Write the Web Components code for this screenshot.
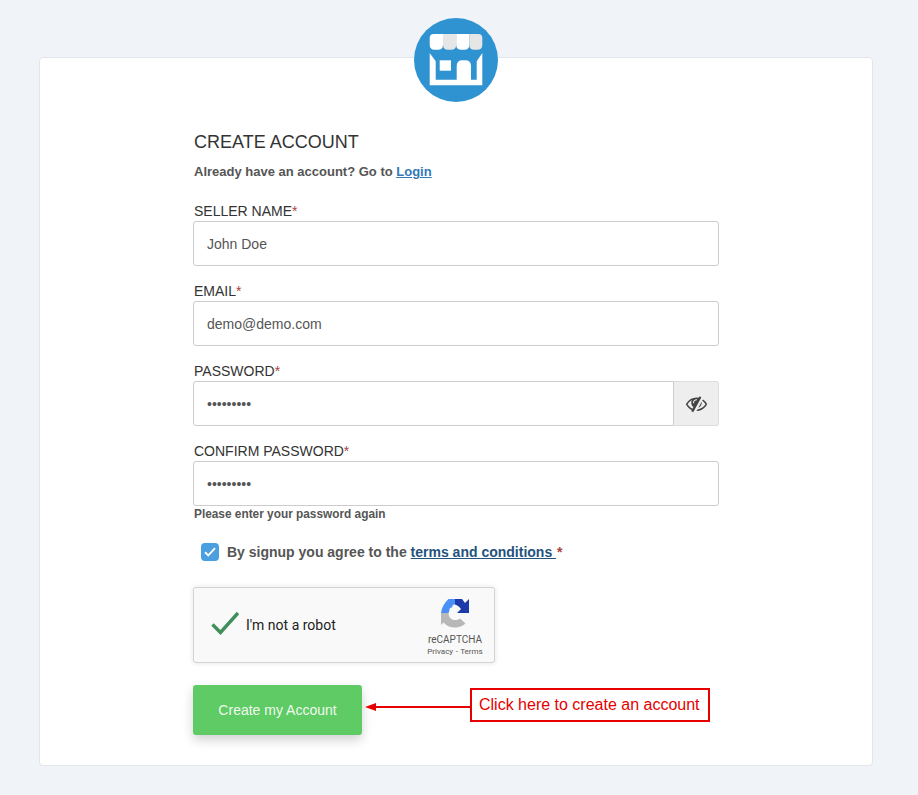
<!DOCTYPE html>
<html>
<head>
<meta charset="utf-8">
<title>Create account</title>
<style>
  html, body { margin: 0; padding: 0; }
  body {
    background: #f0f3f8;
    font-family: "Liberation Sans", Arial, sans-serif;
    color: #333;
  }
</style>
</head>
<body>
<signup-page></signup-page>

<script>
class ShopLogo extends HTMLElement {
  constructor() {
    super();
    this.attachShadow({ mode: "open" });
    this.shadowRoot.innerHTML = `
    <style>
      :host { display: block; width: 84px; height: 84px; }
      svg { display: block; }
    </style>
    <svg width="84" height="84" viewBox="0 0 84 84">
      <circle cx="42" cy="42" r="42" fill="#2f93d1"/>
      <!-- walls -->
      <path fill="#fff" d="M15.700 35 L21.700 43.300 V61.700 H62.700 V43.300 L68.300 35 V67.300 H15.700 Z"/>
      <rect x="25.700" y="42.300" width="11.300" height="10.400" fill="#fff"/>
      <path fill="#fff" d="M42.700 62 V48 Q42.700 42.300 48.500 42.300 H51.200 Q57 42.300 57 48 V62 Z"/>
      <!-- awning -->
      <path fill="#fff" d="M15.700 20 Q15.700 16 19.700 16 H29 V26.700 Q29 31.700 24 31.700 H20.700 Q15.700 31.700 15.700 26.700 Z"/>
      <path fill="#e6e6e6" d="M29 16 H42.200 V26.700 Q42.200 31.700 37.200 31.700 H34 Q29 31.700 29 26.700 Z"/>
      <path fill="#fff" d="M42.200 16 H55.300 V26.700 Q55.300 31.700 50.300 31.700 H47.200 Q42.200 31.700 42.200 26.700 Z"/>
      <path fill="#e6e6e6" d="M55.300 16 H64.300 Q68.300 16 68.300 20 V26.700 Q68.300 31.700 63.300 31.700 H60.300 Q55.300 31.700 55.300 26.700 Z"/>
    </svg>`;
  }
}

class TextField extends HTMLElement {
  constructor() {
    super();
    this.attachShadow({ mode: "open" });
  }

  connectedCallback() {
    const type = this.getAttribute("type") || "text";
    const value = this.getAttribute("value") || "";
    const eye = this.hasAttribute("eye");
    this.shadowRoot.innerHTML = `
    <style>
      :host { display: block; margin-bottom: 17px; }
      label {
        display: block;
        padding-left: 1px;
        font-size: 14px;
        line-height: 16px;
        color: #333;
        margin-bottom: 2px;
      }
      label i { font-style: normal; color: #a94442; }
      .group { display: flex; height: 45px; }
      input {
        flex: 1;
        min-width: 0;
        box-sizing: border-box;
        height: 100%;
        padding: 0 12px 0 13px;
        border: 1px solid #ccc;
        border-radius: 3px;
        background: #fff;
        font: 14px "Liberation Sans", Arial, sans-serif;
        color: #555;
        outline: none;
      }
      .group.eye input { border-radius: 3px 0 0 3px; }
      .addon {
        width: 45px;
        box-sizing: border-box;
        border: 1px solid #ddd;
        border-left: 0;
        border-radius: 0 3px 3px 0;
        background: #eee;
        display: flex;
        align-items: center;
        justify-content: center;
      }
      .hint {
        padding-left: 1px;
        font-size: 11.850px;
        font-weight: bold;
        line-height: 16px;
        color: #555;
      }
    </style>
    <label><slot></slot><i>*</i></label>
    <div class="group ${eye ? "eye" : ""}">
      <input type="${type}" value="${value}">
      ${eye ? `<span class="addon">
        <svg width="21" height="21" viewBox="0 0 1792 1792"><path fill="#444" d="M555 1335l78-141q-87-63-136-159t-49-203q0-121 61-225-229 117-381 353 167 258 427 375zm389-759q0-20-14-34t-34-14q-125 0-214.500 89.500t-89.500 214.500q0 20 14 34t34 14 34-14 14-34q0-86 61-147t147-61q20 0 34-14t14-34zm363-191q0 7-1 9-106 189-316 567t-315 566l-49 89q-10 16-28 16-12 0-134-70-16-10-16-28 0-12 44-87-143-65-263.500-173t-208.500-245q-20-31-20-69t20-69q153-235 380-371t496-136q89 0 180 17l54-97q10-16 28-16 5 0 18 6t31 15.500 33 18.500 31.500 18.500 19.500 11.500q16 10 16 27zm37 447q0 139-79 253.500t-209 164.500l280-502q8 45 8 84zm448 128q0 35-20 69-39 64-109 145-150 172-347.500 267t-419.500 95l74-132q212-18 392.500-137t301.500-307q-115-179-282-294l63-112q95 64 182.500 153t144.500 184q20 34 20 69z"/></svg>
      </span>` : ""}
    </div>
    ${this.hasAttribute("hint") ? `<div class="hint">${this.getAttribute("hint")}</div>` : ""}`;
  }
}

class TermsCheck extends HTMLElement {
  constructor() {
    super();
    this.attachShadow({ mode: "open" });
    this.shadowRoot.innerHTML = `
    <style>
      :host {
        display: flex;
        align-items: center;
        gap: 8px;
        padding-left: 8px;
        font-size: 14px;
        font-weight: bold;
        color: #555;
      }
      .box {
        width: 18px;
        height: 18px;
        border-radius: 4px;
        background: #4a9fe0;
        display: flex;
        align-items: center;
        justify-content: center;
      }
      a { color: #23527c; text-decoration: underline; }
      i { font-style: normal; color: #a94442; margin-left: 1px; }
    </style>
    <span class="box">
      <svg width="12" height="10" viewBox="0 0 12 10"><path d="M1 5.300 L4.300 8.500 L11 1.200" fill="none" stroke="#fff" stroke-width="1.900"/></svg>
    </span>
    <span>By signup you agree to the <a href="#">terms and conditions </a> <i>*</i></span>`;
  }
}

class RobotCheck extends HTMLElement {
  constructor() {
    super();
    this.attachShadow({ mode: "open" });
    this.shadowRoot.innerHTML = `
    <style>
      :host {
        display: flex;
        align-items: center;
        box-sizing: border-box;
        width: 302px;
        height: 76px;
        border: 1px solid #d3d3d3;
        border-radius: 3px;
        background: #f9f9f9;
        box-shadow: 0 0 4px 1px rgba(0,0,0,.08);
        font-family: Roboto, "Liberation Sans", sans-serif;
      }
      .tick { margin: -5px 0 0 17px; display: block; }
      .txt { margin-left: 7px; font-size: 14px; color: #222; flex: 1; }
      .brand {
        align-self: flex-start;
        box-sizing: border-box;
        width: 76px;
        margin-right: 1px;
        padding-top: 10px;
        display: flex;
        flex-direction: column;
        align-items: center;
        color: #555;
      }
      .brand svg { display: block; margin-bottom: 5px; }
      .name { font-size: 10px; line-height: 13px; }
      .links { font-size: 8px; line-height: 11px; word-spacing: .5px; }
    </style>
    <svg class="tick" width="28" height="24" viewBox="0 0 28 24"><path d="M1.500 13.500 L9.500 21.500 L27 2" fill="none" stroke="#3f8f5b" stroke-width="3.400"/></svg>
    <span class="txt">I'm not a robot</span>
    <div class="brand">
      <svg width="30" height="30" viewBox="0 0 30 30">
        <path fill="#4a90f5" d="M1 15 C1.500 10 4 5 8.500 1 H15 V6.500 C13.500 6.500 12.500 7 12.500 8 L12 9.500 C10 9.500 9 11 9.500 12.500 L8.500 15 Z"/>
        <path fill="#1c3aa9" d="M15 1 H22 L25 5 L29 1 V15 H17 L21 11 C19.500 9 17.500 7 15 6.500 Z"/>
        <path fill="#b8b8b8" d="M1 15 H8.500 C8.500 19.500 11.500 22 15 22 C17 22 18.500 21.500 20 20.500 L25.500 25.500 C22.500 28 19 29.500 15 29.500 C10 29.500 6 27.500 3.500 24.500 L1 27 Z"/>
      </svg>
      <span class="name">reCAPTCHA</span>
      <span class="links">Privacy - Terms</span>
    </div>`;
  }
}

class SubmitRow extends HTMLElement {
  constructor() {
    super();
    this.attachShadow({ mode: "open" });
    this.shadowRoot.innerHTML = `
    <style>
      :host { display: flex; align-items: flex-start; }
      button {
        width: 169px;
        height: 50px;
        padding: 0;
        border: 0;
        border-radius: 3px;
        background: #5fcb65;
        color: rgba(255,255,255,.92);
        font: 14px "Liberation Sans", Arial, sans-serif;
        box-shadow: 0 5px 11px rgba(0,0,0,.18);
      }
      .arrow { display: block; margin: 17px 0 0 3px; }
      .note {
        box-sizing: border-box;
        height: 34px;
        margin-top: 3px;
        padding: 0 8px 0 7px;
        border: 2px solid #e60000;
        color: #e60000;
        font-size: 16px;
        line-height: 29px;
        white-space: nowrap;
      }
    </style>
    <button type="button">Create my Account</button>
    <svg class="arrow" width="105" height="10" viewBox="0 0 105 10"><path d="M0 5 L11 1 V4 H105 V6 H11 V9 Z" fill="#e60000"/></svg>
    <div class="note">Click here to create an account</div>`;
  }
}

class SignupPage extends HTMLElement {
  constructor() {
    super();
    this.attachShadow({ mode: "open" });
    this.shadowRoot.innerHTML = `
    <style>
      :host { display: block; padding: 57px 45px 29px 39px; }
      .card {
        position: relative;
        height: 709px;
        box-sizing: border-box;
        padding: 74px 0 0 153px;
        background: #fff;
        border: 1px solid #e2e5ea;
        border-radius: 4px;
      }
      shop-logo { position: absolute; top: -40px; left: 374px; }
      .form { width: 526px; }
      h1 {
        margin: 0;
        padding-left: 1px;
        font-size: 18px;
        font-weight: normal;
        line-height: 20px;
        color: #333;
      }
      .sub {
        margin: 10px 0 21px;
        padding-left: 1px;
        font-size: 13px;
        font-weight: bold;
        line-height: 20px;
        color: #555;
      }
      .sub a { color: #337ab7; text-decoration: underline; }
      terms-check { margin: 21px 0 26px; }
      robot-check { margin-bottom: 22px; }
    </style>
    <div class="card">
      <shop-logo></shop-logo>
      <div class="form">
        <h1>CREATE ACCOUNT</h1>
        <p class="sub">Already have an account? Go to <a href="#">Login</a></p>
        <text-field value="John Doe">SELLER NAME</text-field>
        <text-field value="demo@demo.com">EMAIL</text-field>
        <text-field type="password" value="123456789" eye>PASSWORD</text-field>
        <text-field type="password" value="123456789" hint="Please enter your password again">CONFIRM PASSWORD</text-field>
        <terms-check></terms-check>
        <robot-check></robot-check>
        <submit-row></submit-row>
      </div>
    </div>`;
  }
}

customElements.define("shop-logo", ShopLogo);
customElements.define("text-field", TextField);
customElements.define("terms-check", TermsCheck);
customElements.define("robot-check", RobotCheck);
customElements.define("submit-row", SubmitRow);
customElements.define("signup-page", SignupPage);
</script>
</body>
</html>
